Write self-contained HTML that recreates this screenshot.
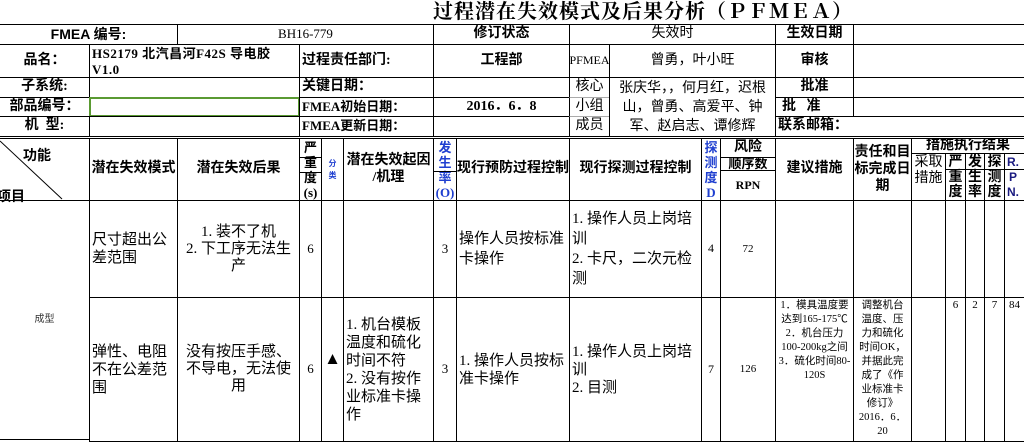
<!DOCTYPE html>
<html><head><meta charset="utf-8"><style>
*{margin:0;padding:0;box-sizing:border-box}
body{width:1024px;height:437px;overflow:hidden;background:#fff;position:relative;font-family:"Liberation Serif","Noto Sans CJK SC",sans-serif;color:#000}
.c{position:absolute;border:1px solid #000;display:flex;align-items:center;justify-content:center;text-align:center;font-size:13px;line-height:1.15;overflow:hidden}
.b{font-weight:bold}
.l{justify-content:flex-start;text-align:left;padding-left:2px}
.n{font-family:"Liberation Sans","Noto Sans CJK SC",sans-serif}
.t{font-size:15px;line-height:18px}
.blue{color:#1f3fd0}
.hl{position:absolute;height:1px;background:#000}
.s{font-size:10.5px;line-height:14px;align-items:flex-start;padding:1px 2px 0}
</style></head><body>
<div style="position:absolute;left:433px;top:0;width:420px;height:24px;font:bold 20px 'Liberation Serif','Noto Serif CJK SC',serif;letter-spacing:1px;white-space:nowrap;line-height:24px">过程潜在失效模式及后果分析（ＰＦＭＥＡ）</div>

<div class="c b n" style="left:-1px;top:24px;width:179px;height:21px;font-size:14px">FMEA 编号:</div>
<div class="c" style="left:177px;top:24px;width:257px;height:21px">BH16-779</div>
<div class="c b" style="left:433px;top:24px;width:137px;height:21px;font-size:14px">修订状态</div>
<div class="c" style="left:569px;top:24px;width:207px;height:21px;font-size:14px">失效时</div>
<div class="c b" style="left:775px;top:24px;width:79px;height:21px;font-size:14px">生效日期</div>
<div class="c" style="left:853px;top:24px;width:172px;height:21px"></div>

<div class="c b" style="left:-1px;top:44px;width:91px;height:34px;font-size:14px">品名：</div>
<div class="c b l" style="left:89px;top:44px;width:211px;height:34px;align-items:flex-start;padding-top:1px;line-height:16px;font-size:13px;letter-spacing:0.5px">HS2179&nbsp;北汽昌河F42S&nbsp;导电胶<br>V1.0</div>
<div class="c b l" style="left:299px;top:44px;width:135px;height:34px;font-size:14px">过程责任部门:</div>
<div class="c b" style="left:433px;top:44px;width:137px;height:34px;font-size:14px">工程部</div>
<div class="c" style="left:569px;top:44px;width:41px;height:34px;font-size:12px">PFMEA</div>
<div class="c" style="left:609px;top:44px;width:167px;height:34px;font-size:14px">曾勇，叶小旺</div>
<div class="c b" style="left:775px;top:44px;width:79px;height:34px;font-size:14px">审核</div>
<div class="c" style="left:853px;top:44px;width:172px;height:34px"></div>

<div class="c b" style="left:-1px;top:77px;width:91px;height:21px;font-size:14px">子系统:</div>
<div class="c" style="left:89px;top:77px;width:211px;height:21px"></div>
<div class="c b l" style="left:299px;top:77px;width:135px;height:21px;font-size:14px">关键日期：</div>
<div class="c" style="left:433px;top:77px;width:137px;height:21px"></div>
<div class="c b" style="left:775px;top:77px;width:79px;height:21px;font-size:14px">批准</div>
<div class="c" style="left:853px;top:77px;width:172px;height:21px"></div>

<div class="c b" style="left:-1px;top:97px;width:91px;height:20px;font-size:14px">部品编号：</div>
<div class="c" style="left:89px;top:97px;width:211px;height:20px;border:2px solid #5a9a32"></div>
<div class="c b l" style="left:299px;top:97px;width:135px;height:20px;font-size:13px">FMEA初始日期：</div>
<div class="c b" style="left:433px;top:97px;width:137px;height:20px;font-size:14px">2016．6．8</div>
<div class="c b l" style="left:775px;top:97px;width:79px;height:20px;padding-left:6px;font-size:14px">批&nbsp;&nbsp;&nbsp;准</div>
<div class="c" style="left:853px;top:97px;width:172px;height:20px"></div>

<div class="c b" style="left:-1px;top:116px;width:91px;height:21px;font-size:14px">机&nbsp;&nbsp;型:</div>
<div class="c" style="left:89px;top:116px;width:211px;height:21px"></div>
<div class="c b l" style="left:299px;top:116px;width:135px;height:21px;font-size:13px">FMEA更新日期：</div>
<div class="c" style="left:433px;top:116px;width:137px;height:21px"></div>
<div class="c b l" style="left:775px;top:116px;width:250px;height:21px;font-size:14px">联系邮箱：</div>

<div class="c" style="left:569px;top:77px;width:41px;height:21px;border-bottom-color:#aaa;font-size:14px">核心</div>
<div class="c" style="left:569px;top:97px;width:41px;height:20px;border-top-color:#aaa;border-bottom-color:#aaa;font-size:14px">小组</div>
<div class="c" style="left:569px;top:116px;width:41px;height:21px;border-top-color:#aaa;font-size:14px">成员</div>
<div class="c" style="left:609px;top:77px;width:167px;height:60px;font-size:14px;line-height:19px;padding:0 1px">张庆华，，何月红，迟根山，曾勇、高爱平、钟军、赵启志、谭修辉</div>

<div class="hl" style="left:0;top:138px;width:1024px"></div>
<div class="c" style="left:-1px;top:138px;width:91px;height:63px"></div>
<svg style="position:absolute;left:0;top:138px" width="90" height="62"><line x1="0" y1="3" x2="62" y2="61" stroke="#000" stroke-width="1"/></svg>
<div class="b" style="position:absolute;left:23px;top:145px;font-size:14px">功能</div>
<div class="b" style="position:absolute;left:-3px;top:186px;font-size:14px">项目</div>
<div class="c b" style="left:89px;top:138px;width:89px;height:63px;font-size:14px">潜在失效模式</div>
<div class="c b" style="left:177px;top:138px;width:123px;height:63px;font-size:14px">潜在失效后果</div>
<div class="c b" style="left:299px;top:138px;width:23px;height:63px;align-items:flex-start;line-height:15px;padding-top:1px">严<br>重<br>度<br>(s)</div>
<div class="hl" style="left:299px;top:157px;width:22px"></div>
<div class="hl" style="left:299px;top:172px;width:22px"></div>
<div class="c b blue" style="left:321px;top:138px;width:23px;height:63px;font-size:8px;line-height:12px">分<br>类</div>
<div class="c b" style="left:343px;top:138px;width:91px;height:63px;font-size:14px">潜在失效起因<br>/机理</div>
<div class="c b blue" style="left:433px;top:138px;width:24px;height:63px;align-items:flex-start;line-height:15px;padding-top:1px">发<br>生<br>率<br>(O)</div>
<div class="hl" style="left:433px;top:171px;width:23px"></div>
<div class="c b" style="left:456px;top:138px;width:114px;height:63px;font-size:14px">现行预防过程控制</div>
<div class="c b" style="left:569px;top:138px;width:133px;height:63px;font-size:14px">现行探测过程控制</div>
<div class="c b blue" style="left:701px;top:138px;width:20px;height:63px;align-items:flex-start;line-height:15px;padding-top:1px">探<br>测<br>度<br>D</div>
<div class="c b" style="left:720px;top:138px;width:56px;height:20px;font-size:14px">风险</div>
<div class="c b" style="left:720px;top:157px;width:56px;height:14px;font-size:13px">顺序数</div>
<div class="c b" style="left:720px;top:170px;width:56px;height:31px;font-size:12px">RPN</div>
<div class="c b" style="left:775px;top:138px;width:79px;height:63px;font-size:14px">建议措施</div>
<div class="c b" style="left:853px;top:138px;width:59px;height:63px;line-height:17px;font-size:14px">责任和目标完成日期</div>
<div class="c b" style="left:911px;top:138px;width:114px;height:16px;font-size:14px">措施执行结果</div>
<div class="c" style="left:911px;top:153px;width:35px;height:48px;align-items:flex-start;padding-top:1px;line-height:16px;font-size:14px">采取<br>措施</div>
<div class="c b" style="left:945px;top:153px;width:21px;height:48px;line-height:15px;font-size:14px">严<br>重<br>度</div>
<div class="c b" style="left:965px;top:153px;width:20px;height:48px;line-height:15px;font-size:14px">发<br>生<br>率</div>
<div class="c b" style="left:984px;top:153px;width:21px;height:48px;line-height:15px;font-size:14px">探<br>测<br>度</div>
<div class="c b n" style="left:1004px;top:153px;width:21px;height:48px;line-height:15px;font-size:12px;color:#1a1a80;justify-content:flex-start;padding-left:2px">R.<br>P<br>N.</div>
<div class="hl" style="left:945px;top:169px;width:79px"></div>

<div class="c" style="left:-1px;top:200px;width:91px;height:240px;font-size:10px;color:#333">成型</div>
<div class="c l t" style="left:89px;top:200px;width:89px;height:98px">尺寸超出公差范围</div>
<div class="c t" style="left:177px;top:200px;width:123px;height:98px;line-height:17px;padding:0 4px">1. 装不了机<br>2. 下工序无法生产</div>
<div class="c" style="left:299px;top:200px;width:23px;height:98px">6</div>
<div class="c" style="left:321px;top:200px;width:23px;height:98px"></div>
<div class="c" style="left:343px;top:200px;width:91px;height:98px"></div>
<div class="c" style="left:433px;top:200px;width:24px;height:98px">3</div>
<div class="c l t" style="left:456px;top:200px;width:114px;height:98px;line-height:20px">操作人员按标准卡操作</div>
<div class="c l t" style="left:569px;top:200px;width:133px;height:98px;line-height:20px">1. 操作人员上岗培训<br>2. 卡尺，二次元检测</div>
<div class="c" style="left:701px;top:200px;width:20px;height:98px;font-size:12px">4</div>
<div class="c" style="left:720px;top:200px;width:56px;height:98px;font-size:11px">72</div>
<div class="c" style="left:775px;top:200px;width:79px;height:98px"></div>
<div class="c" style="left:853px;top:200px;width:59px;height:98px"></div>
<div class="c" style="left:911px;top:200px;width:35px;height:98px"></div>
<div class="c" style="left:945px;top:200px;width:21px;height:98px"></div>
<div class="c" style="left:965px;top:200px;width:20px;height:98px"></div>
<div class="c" style="left:984px;top:200px;width:21px;height:98px"></div>
<div class="c" style="left:1004px;top:200px;width:21px;height:98px"></div>

<div class="c l t" style="left:89px;top:297px;width:89px;height:145px">弹性、电阻不在公差范围</div>
<div class="c t" style="left:177px;top:297px;width:123px;height:145px;line-height:17px;padding:0 4px">没有按压手感、不导电，无法使用</div>
<div class="c" style="left:299px;top:297px;width:23px;height:145px">6</div>
<div class="c" style="left:321px;top:297px;width:23px;height:145px;font-size:17px;padding-bottom:22px">▲</div>
<div class="c l t" style="left:343px;top:297px;width:91px;height:145px">1. 机台模板温度和硫化时间不符<br>2. 没有按作业标准卡操作</div>
<div class="c" style="left:433px;top:297px;width:24px;height:145px">3</div>
<div class="c l t" style="left:456px;top:297px;width:114px;height:145px">1. 操作人员按标准卡操作</div>
<div class="c l t" style="left:569px;top:297px;width:133px;height:145px">1. 操作人员上岗培训<br>2. 目测</div>
<div class="c" style="left:701px;top:297px;width:20px;height:145px;font-size:12px">7</div>
<div class="c" style="left:720px;top:297px;width:56px;height:145px;font-size:11px">126</div>
<div class="c s" style="left:775px;top:297px;width:79px;height:145px">1．模具温度要达到165-175℃　2．机台压力100-200kg之间<br>3．硫化时间80-120S</div>
<div class="c s" style="left:853px;top:297px;width:59px;height:145px;padding:1px 3px 0">调整机台温度、压力和硫化时间OK，并据此完成了《作业标准卡修订》2016．6．20</div>
<div class="c" style="left:911px;top:297px;width:35px;height:145px"></div>
<div class="c" style="left:945px;top:297px;width:21px;height:145px;align-items:flex-start;font-size:11px;padding-top:1px">6</div>
<div class="c" style="left:965px;top:297px;width:20px;height:145px;align-items:flex-start;font-size:11px;padding-top:1px">2</div>
<div class="c" style="left:984px;top:297px;width:21px;height:145px;align-items:flex-start;font-size:11px;padding-top:1px">7</div>
<div class="c" style="left:1004px;top:297px;width:21px;height:145px;align-items:flex-start;font-size:11px;padding-top:1px">84</div>
</body></html>
